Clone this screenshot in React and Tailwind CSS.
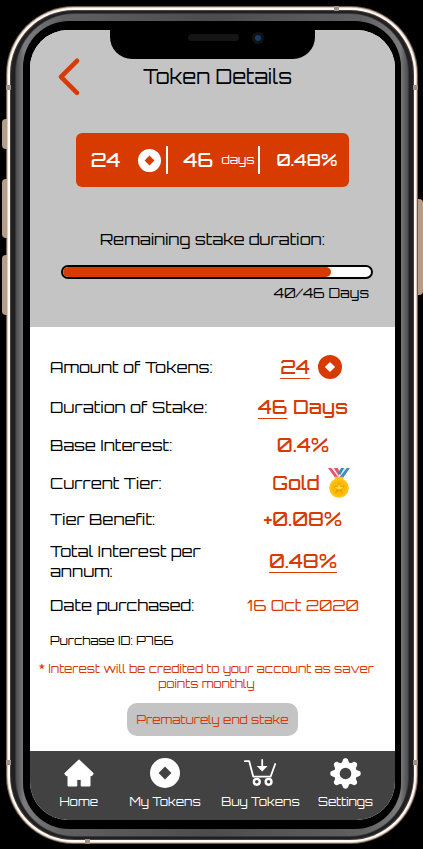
const TOTAL_DAYS = 46;
const ELAPSED_DAYS = 40;

function TokenIcon({ className }) {
  return (
    <svg viewBox="0 0 30 30" className={className} aria-hidden="true">
      <path
        fill="currentColor"
        fillRule="evenodd"
        d="M15 0a15 15 0 1 0 0 30a15 15 0 0 0 0-30zM15 8.6L21.4 15L15 21.4L8.6 15z"
      />
    </svg>
  );
}

function HomeIcon() {
  return (
    <svg viewBox="0 0 30 28" className="h-7 w-[30px]" aria-hidden="true">
      <path
        fill="currentColor"
        stroke="currentColor"
        strokeWidth="1"
        strokeLinejoin="round"
        d="M15 .8L29.3 14.4L28 16.6H26V27H17.2V20.4H12.8V27H4V16.6H2L.7 14.4z"
      />
    </svg>
  );
}

function CartIcon() {
  return (
    <svg viewBox="0 0 34 28" className="h-7 w-[34px]" fill="none" stroke="currentColor" strokeWidth="1.8" strokeLinecap="round" strokeLinejoin="round" aria-hidden="true">
      <path d="M1.8 2.2H6.2L10.2 17.6H27.6L32.2 5" />
      <path d="M19.2 1V8" />
      <path d="M13.8 7H24.6L19.2 12.4z" fill="currentColor" stroke="none" />
      <circle cx="13.8" cy="22.8" r="2.9" strokeWidth="2.4" />
      <circle cx="25.6" cy="22.8" r="2.9" strokeWidth="2.4" />
    </svg>
  );
}

function GearIcon() {
  return (
    <svg viewBox="0 0 32 32" className="h-[31px] w-[31px]" aria-hidden="true">
      <g fill="currentColor">
        <path
          fillRule="evenodd"
          d="M16 4.2a11.8 11.8 0 1 0 0 23.6a11.8 11.8 0 0 0 0-23.6zM16 10a6 6 0 1 1 0 12a6 6 0 0 1 0-12z"
        />
        {[0, 45, 90, 135, 180, 225, 270, 315].map((angle) => (
          <path
            key={angle}
            transform={`rotate(${angle} 16 16)`}
            d="M11 6C12.4 5.2 12.6 4 13.2 2.2C14 -.4 18 -.4 18.8 2.2C19.4 4 19.6 5.2 21 6z"
          />
        ))}
      </g>
    </svg>
  );
}

function MedalIcon() {
  return (
    <svg viewBox="0 0 22 30" className="h-[30px] w-[22px]" aria-hidden="true">
      <path fill="#e8506a" d="M0 0H4L12 10H7.5z" />
      <path fill="#e6e7e8" d="M3.2 0H6.6L13 9.5H10.6z" />
      <path fill="#e8506a" d="M6 0H9.6L14 8L12 10z" />
      <path fill="#428bc1" d="M22 0H17.6L9.4 10H15z" />
      <path fill="#e6e7e8" d="M18.8 0H15.6L9.6 8.4L11 10z" />
      <path fill="#428bc1" d="M16.2 0H13L10 5L12.2 7z" />
      <circle cx="11" cy="20" r="9.8" fill="#fec417" />
      <circle cx="11" cy="20" r="7.6" fill="#ffb804" />
      <rect x="6.5" y="8.8" width="9" height="2.4" rx="1.2" fill="#fec417" />
      <path fill="#e8a000" d="M11 13.8L12.7 18L17 18.2L13.7 21L14.8 25.4L11 23L7.2 25.4L8.3 21L5 18.2L9.3 18z" />
      <path fill="#ffd84a" d="M11 15.4L12 18.8L15.2 19L12.6 21.2L11 21.6L9.4 21.2L6.8 19L10 18.8z" />
    </svg>
  );
}

function DetailRow({ label, height, icon, children }) {
  return (
    <div className={`grid grid-cols-[172fr_162fr] items-center ${height}`}>
      <dt className="text-base leading-5">{label}</dt>
      <dd className={`flex items-center justify-center gap-2 text-[19px] leading-6 font-medium whitespace-nowrap text-[#d73b02] ${icon ? "pl-4" : ""}`}>
        {children}
        {icon}
      </dd>
    </div>
  );
}

function NavItem({ label, children }) {
  return (
    <a href="#" className="flex flex-col items-center gap-[5px] text-white">
      <span className="flex h-8 items-center">{children}</span>
      <span className="text-xs leading-4 whitespace-nowrap">{label}</span>
    </a>
  );
}

function PhoneFrame({ children }) {
  return (
    <div className="relative mx-auto max-w-[440px] pt-[6px] pr-[5px] pb-[5px] pl-[6px]">
      <span className="absolute top-[119px] left-[2px] h-[30px] w-[5px] rounded-l-sm bg-[#b79c88]" />
      <span className="absolute top-[179px] left-[2px] h-[59px] w-[5px] rounded-l-sm bg-[#b79c88]" />
      <span className="absolute top-[255px] left-[2px] h-[60px] w-[5px] rounded-l-sm bg-[#b79c88]" />
      <span className="absolute top-[199px] right-0 h-[96px] w-[5px] rounded-r-sm bg-[#b79c88]" />
      <div className="rounded-[68px] bg-[#6f5a4b] p-px">
        <div className="rounded-[67px] bg-[#d9cabf] p-px">
          <div className="rounded-[66px] bg-[#fffaf6] p-[2px]">
            <div className="rounded-[64px] bg-[#4e4138] p-px">
              <div className="rounded-[63px] bg-[#202022] px-1 py-[2px]">
                <div className="rounded-[60px] bg-[#38383a] p-px">
                  <div className="rounded-[58px] bg-[linear-gradient(to_right,#4c4c4e,#7c7c7e_2%,#606062_12%,#4c4c4e_50%,#606062_88%,#7c7c7e_98%,#4c4c4e)] px-[7px] py-[7px]">
                    <div className="rounded-[46px] bg-black py-[9px] pr-[6px] pl-[7px]">
                      {children}
                    </div>
                  </div>
                </div>
              </div>
            </div>
          </div>
        </div>
      </div>
      <span className="absolute top-[6px] left-[334px] h-[5px] w-[5px] bg-[#a39184]" />
      <span className="absolute bottom-[5px] left-[85px] h-[5px] w-[5px] bg-[#a39184]" />
      <span className="absolute top-[85px] left-[6px] h-[5px] w-[5px] bg-[#a39184]" />
      <span className="absolute top-[85px] right-[5px] h-[5px] w-[5px] bg-[#a39184]" />
      <span className="absolute bottom-[84px] left-[6px] h-[5px] w-[5px] bg-[#a39184]" />
      <span className="absolute right-[5px] bottom-[84px] h-[5px] w-[5px] bg-[#a39184]" />
    </div>
  );
}

function Notch() {
  return (
    <div className="absolute inset-x-20 top-0 flex h-[29px] items-start justify-center rounded-b-[22px] bg-black pt-[2px]">
      <span className="mt-[2px] ml-[26px] h-[7px] w-[51px] rounded-full bg-[#151515]" />
      <span className="ml-[13px] flex h-3 w-3 items-center justify-center rounded-full bg-[#101216]">
        <span className="h-[6px] w-[6px] rounded-full bg-[#173a66]" />
      </span>
    </div>
  );
}

export default function App() {
  return (
    <div className="min-h-screen bg-black font-['Orbitron','DejaVu_Sans',sans-serif] text-black">
      <PhoneFrame>
        <div className="relative overflow-hidden rounded-[38px] bg-white">
          <Notch />
          <header className="bg-[#c4c4c4] pt-7 pb-6">
            <div className="flex items-center pr-10 pl-7">
              <button type="button" aria-label="Back" className="text-[#d73b02]">
                <svg viewBox="0 0 22 38" className="h-[38px] w-[22px]" fill="none" stroke="currentColor" strokeWidth="4.6" strokeLinecap="round" strokeLinejoin="round" aria-hidden="true">
                  <path d="M19 2.8L3 18.8L19 34.8" />
                </svg>
              </button>
              <h1 className="flex-1 text-center text-xl">Token Details</h1>
            </div>

            <div className="mx-auto mt-[37px] grid h-[54px] w-3/4 grid-cols-[90fr_93fr_91fr] items-center rounded-md bg-[#d73b02] font-medium text-white">
              <div className="flex h-7 items-center justify-between pr-[5px] pl-[15px]">
                <span className="text-[19px]">24</span>
                <TokenIcon className="h-[23px] w-[23px]" />
              </div>
              <div className="flex h-7 items-center justify-between border-l-2 border-white pr-1 pl-4">
                <span className="text-[19px]">46</span>
                <span className="text-xs font-normal">days</span>
              </div>
              <div className="flex h-7 items-center justify-center border-l-2 border-white pl-1">
                <span className="text-[17px]">0.48%</span>
              </div>
            </div>

            <h2 id="stake-duration" className="mt-[42px] text-center text-base leading-5">
              Remaining stake duration:
            </h2>
            <div className="mt-4 pr-[22px] pl-[31px]">
              <div
                role="progressbar"
                aria-labelledby="stake-duration"
                aria-valuemin={0}
                aria-valuemax={TOTAL_DAYS}
                aria-valuenow={ELAPSED_DAYS}
                className="h-[14px] overflow-hidden rounded-full border-2 border-black bg-white"
              >
                <div
                  className="h-full rounded-full bg-[#d73b02]"
                  style={{ width: `${(ELAPSED_DAYS / TOTAL_DAYS) * 100}%` }}
                />
              </div>
              <p className="mt-1 pr-1 text-right text-sm">
                {ELAPSED_DAYS}/{TOTAL_DAYS} Days
              </p>
            </div>
          </header>

          <main className="pt-5 pb-[15px]">
            <dl className="pr-[11px] pl-5">
              <DetailRow label="Amount of Tokens:" height="min-h-10" icon={<TokenIcon className="h-6 w-6" />}>
                <span className="underline decoration-1 underline-offset-4">24</span>
              </DetailRow>
              <DetailRow label="Duration of Stake:" height="min-h-10">
                <span>
                  <span className="underline decoration-1 underline-offset-4">46</span> Days
                </span>
              </DetailRow>
              <DetailRow label="Base Interest:" height="min-h-9">0.4%</DetailRow>
              <DetailRow label="Current Tier:" height="min-h-10" icon={<MedalIcon />}>
                Gold
              </DetailRow>
              <DetailRow label="Tier Benefit:" height="min-h-8">+0.08%</DetailRow>
              <DetailRow label="Total Interest per annum:" height="min-h-[52px]">
                <span className="underline decoration-1 underline-offset-4">0.48%</span>
              </DetailRow>
              <DetailRow label="Date purchased:" height="min-h-9">
                <span className="text-base leading-6 font-normal">16 Oct 2020</span>
              </DetailRow>
            </dl>
            <p className="mt-2 pl-5 text-xs leading-5">Purchase ID: P766</p>
            <p className="mt-[10px] pr-5 pl-2 text-center text-xs leading-[15px] text-[#d73b02]">
              * Interest will be credited to your account as saver points monthly
            </p>
            <div className="mt-3 flex justify-center">
              <button type="button" className="rounded-[10px] bg-[#c4c4c4] px-[10px] py-2 text-xs leading-[17px] text-[#d73b02]">
                Prematurely end stake
              </button>
            </div>
          </main>

          <nav className="grid grid-cols-[98fr_76fr_116fr_53fr] bg-[#424242] pt-[6px] pr-[22px] pb-[10px]">
            <NavItem label="Home"><HomeIcon /></NavItem>
            <NavItem label="My Tokens"><TokenIcon className="h-[30px] w-[30px]" /></NavItem>
            <NavItem label="Buy Tokens"><CartIcon /></NavItem>
            <NavItem label="Settings"><GearIcon /></NavItem>
          </nav>
        </div>
      </PhoneFrame>
    </div>
  );
}
